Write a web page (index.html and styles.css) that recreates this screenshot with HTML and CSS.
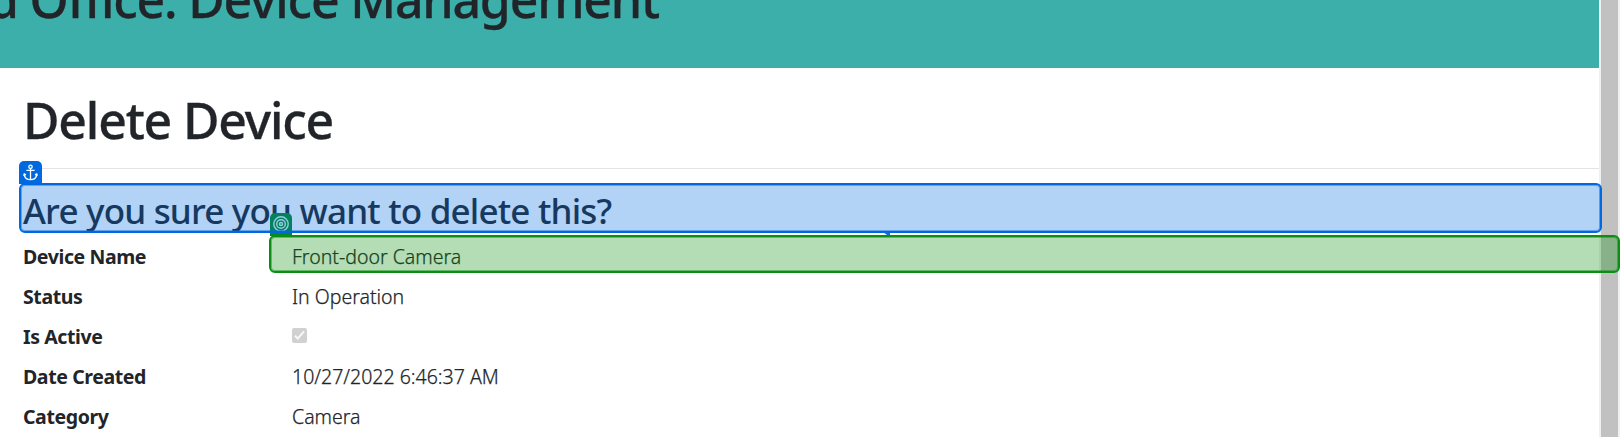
FILE: index.html
```html
<!DOCTYPE html>
<html lang="en">
<head>
<meta charset="utf-8">
<title>Delete Device</title>
<link rel="stylesheet" href="styles.css">
</head>
<body>
<div class="page">
  <div class="content">
    <header class="banner"><div class="banner-title">d Office: Device Management</div></header>
    <main class="main">
      <h1 class="title">Delete Device</h1>
      <hr class="rule">
      <h3 class="question">Are you sure you want to delete this?</h3>
      <dl class="details">
        <dt>Device Name</dt><dd>Front-door Camera</dd>
        <dt>Status</dt><dd>In Operation</dd>
        <dt>Is Active</dt>
        <dd><svg class="check" viewBox="0 0 15 15"><rect width="15" height="15" rx="2" fill="#d1d1d1"/><path d="M3 7.800 5.800 10.600 12 3.300" fill="none" stroke="#f8f8f8" stroke-width="2"/></svg></dd>
        <dt>Date Created</dt><dd>10/27/2022 6:46:37 AM</dd>
        <dt>Category</dt><dd>Camera</dd>
      </dl>
    </main>
  </div>
  <div class="scrollbar"></div>
</div>
<div class="target-tab"><svg viewBox="0 0 22 23" fill="none" stroke="#d8f4ec" stroke-width="1.400"><circle cx="11" cy="11" r="7.200"/><circle cx="11" cy="11" r="4.300"/><circle cx="11" cy="11" r="1.500"/></svg></div>
<div class="anchor-box"></div>
<div class="anchor-tab"><svg viewBox="0 0 23 23" fill="none" stroke="#fff" stroke-width="1.300"><circle cx="11.500" cy="5.800" r="1.700"/><path d="M11.500 7.500V18.500M7.400 9.400h8.200M5.200 12.700c.2 3.600 2.700 6 6.300 6s6.100-2.400 6.300-6M4.600 14.700l.7-1.800 1.700 1M18.400 14.700l-.7-1.800-1.700 1"/></svg></div>
<div class="target-box"></div>
<svg class="arrow" viewBox="0 0 8 4"><path d="M0 0H5L7 1V3H4Z" fill="#0c6ddf"/></svg>
</body>
</html>
```
FILE: styles.css
```css
* { box-sizing: border-box; }
body {
  margin: 0;
  width: 1620px;
  height: 437px;
  overflow: hidden;
  position: relative;
  background: #fff;
  color: #212529;
  font-family: "Noto Sans", "Open Sans", sans-serif;
}
.page { display: flex; height: 437px; }
.content { width: 1599px; overflow: hidden; }
.scrollbar {
  width: 21px;
  background: #c1c1c1;
  border-left: 2px solid #f0f0f0;
  border-right: 2px solid #f0f0f0;
}
.banner {
  height: 68px;
  background: #3cafaa;
  display: flex;
  align-items: flex-start;
}
.banner-title { margin-top: -36px; margin-left: -12px; }
.banner-title, .title {
  font-size: 50px;
  line-height: 70px;
  font-weight: 500;
  letter-spacing: -1.2px;
  white-space: nowrap;
  -webkit-text-stroke: .3px #212529;
}
.main { padding: 17px 0 0 23px; }
.title { margin: 0; height: 83px; }
.rule { margin: 0; border: 0; height: 1px; background: #e3e4e5; }
.question {
  margin: 0;
  padding-top: 17px;
  height: 68px;
  font-size: 35px;
  line-height: 50px;
  font-weight: 500;
  letter-spacing: -.81px;
  white-space: nowrap;
}
.details {
  margin: 0;
  display: grid;
  grid-template-columns: 269px 1fr;
  grid-auto-rows: 40px;
  font-size: 19.5px;
  line-height: 40px;
  white-space: nowrap;
}
.details dt { font-weight: 700; letter-spacing: -.4px; }
.details dd { margin: 0; font-weight: 300; -webkit-text-stroke: .25px #212529; }
.check { display: block; width: 15px; height: 15px; margin-top: 11px; }
.anchor-box, .target-box, .anchor-tab, .target-tab, .arrow { position: absolute; }
.anchor-box {
  left: 19px; top: 183px; width: 1583px; height: 50px;
  border: 2px solid #0069e0;
  border-radius: 6px;
  background: rgba(0, 105, 224, .3);
  box-shadow: inset 0 0 0 1px rgba(0, 105, 224, .45);
}
.anchor-tab {
  left: 19px; top: 161px; width: 23px; height: 23px;
  border-radius: 5px 5px 0 0;
  background: #0069e0;
}
.target-box {
  left: 269px; top: 235px; width: 1351px; height: 38px;
  border: 2px solid #0b8f12;
  border-radius: 6px;
  background: rgba(5, 140, 10, .3);
  box-shadow: inset 0 0 0 1px rgba(5, 140, 10, .45);
}
.target-tab {
  left: 270px; top: 213px; width: 22px; height: 23px;
  border-radius: 5px 5px 0 0;
  background: #048b20;
}
.anchor-tab svg, .target-tab svg { display: block; width: 100%; height: 100%; }
.arrow { left: 883px; top: 232px; width: 8px; height: 4px; }
```
